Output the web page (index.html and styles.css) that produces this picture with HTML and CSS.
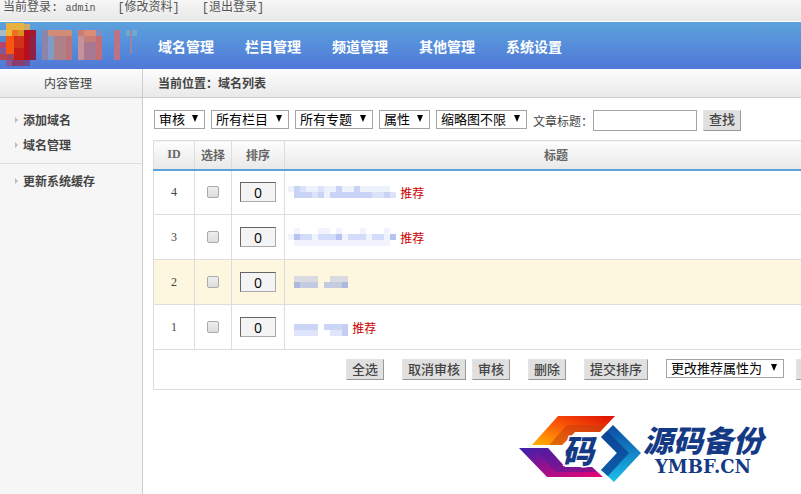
FILE: index.html
```
<!DOCTYPE html>
<html lang="zh-CN">
<head>
    <meta charset="UTF-8">
    <meta name="viewport" content="width=device-width, initial-scale=1.0">
    <title>域名列表</title>
    <link rel="stylesheet" href="styles.css">
</head>
<body>

    <div class="topbar">
        <span>当前登录: <span class="user">admin</span></span>
        <a href="#">[修改资料]</a>
        <a href="#">[退出登录]</a>
    </div>

    <header class="header">
        <div class="logo">
            <svg width="142" height="47" viewBox="0 0 142 47" shape-rendering="crispEdges">
                <path fill="#a8bcc5" d="M0 8h6v6H0z"/>
                <path fill="#5288d0" d="M0 14h6v6H0z"/>
                <path fill="#b5456b" d="M0 20h6v6H0z"/>
                <path fill="#82579c" d="M0 26h6v6H0z"/>
                <path fill="#b84350" d="M0 32h6v6H0z"/>
                <path fill="#e8b240" d="M6 1h18v7H6z"/>
                <path fill="#c9ad68" d="M24 2h6v6h-6z"/>
                <path fill="#eeb63c" d="M6 8h6v6H6z"/>
                <path fill="#ee701e" d="M12 8h6v6h-6z"/>
                <path fill="#d8901f" d="M18 8h6v6h-6z"/>
                <path fill="#fb5512" d="M6 14h8v18H6z"/>
                <path fill="#d3301a" d="M14 14h10v18H14z"/>
                <path fill="#c51c17" d="M14 26h10v12H14z"/>
                <path fill="#b60f1d" d="M24 8h6v30h-6z"/>
                <path fill="#a5182d" d="M30 8h6v6h-6z"/>
                <path fill="#8d2249" d="M30 14h6v24h-6z"/>
                <path fill="#a24565" d="M6 32h8v6H6z"/>
                <path fill="#8a5795" d="M6 38h6v6H6z"/>
                <path fill="#8a3d70" d="M12 38h12v6H12z"/>
                <path fill="#6d4b94" d="M24 38h6v6h-6z"/>
                <path fill="#8d84a8" d="M42 8h6v30h-6z"/>
                <path fill="#b08088" d="M48 8h24v30H48z"/>
                <path fill="#7e9bc9" d="M48 14h6v24h-6z"/>
                <path fill="#d18c78" d="M48 8h24v6H48z"/>
                <path fill="#ba7479" d="M66 14h6v24h-6z"/>
                <path fill="#c77e77" d="M78 8h24v30H78z"/>
                <path fill="#c6919b" d="M78 14h6v24h-6z"/>
                <path fill="#a87791" d="M84 20h12v18H84z"/>
                <path fill="#dc8c77" d="M84 8h12v6H84z"/>
                <path fill="#7f8fc6" d="M96 8h6v6h-6z"/>
                <path fill="#c46d75" d="M96 14h6v24h-6z"/>
                <path fill="#bc7384" d="M114 8h6v30h-6z"/>
                <path fill="#6fa9cf" d="M126 8h11v6h-11z"/>
                <path fill="#9b83a5" d="M130 8h2v24h-2z"/>
            </svg>
        </div>
        <nav class="nav">
            <a href="#">域名管理</a>
            <a href="#">栏目管理</a>
            <a href="#">频道管理</a>
            <a href="#">其他管理</a>
            <a href="#">系统设置</a>
        </nav>
    </header>

    <div class="wrap">
        <aside class="sidebar">
            <div class="side-title">内容管理</div>
            <ul class="menu">
                <li><a href="#">添加域名</a></li>
                <li><a href="#">域名管理</a></li>
            </ul>
            <ul class="menu">
                <li><a href="#">更新系统缓存</a></li>
            </ul>
        </aside>

        <main class="main">
            <div class="crumb">当前位置：域名列表</div>

            <form class="search">
                <select class="w-s" aria-label="审核"><option>审核</option></select>
                <select class="w-m" aria-label="栏目"><option>所有栏目</option></select>
                <select class="w-m" aria-label="专题"><option>所有专题</option></select>
                <select class="w-s" aria-label="属性"><option>属性</option></select>
                <select class="w-l" aria-label="缩略图"><option>缩略图不限</option></select>
                <div class="field">
                    <label for="keyword">文章标题：</label>
                    <input type="text" id="keyword" class="keyword">
                </div>
                <button type="button" class="btn">查找</button>
            </form>

            <table class="list">
                <thead>
                    <tr>
                        <th class="c-id">ID</th>
                        <th class="c-check">选择</th>
                        <th class="c-order">排序</th>
                        <th class="c-title">标题</th>
                        <th></th>
                    </tr>
                </thead>
                <tbody>
                    <tr>
                        <td class="id">4</td>
                        <td><input type="checkbox" aria-label="选择 4"></td>
                        <td><input type="text" class="order" value="0" aria-label="排序 4"></td>
                        <td class="title">
                            <svg width="108" height="18" viewBox="0 0 108 18" shape-rendering="crispEdges">
                                <path fill="#edf1fc" d="M0 3h102v6H0zM6 9h102v6H6z"/>
                                <path fill="#dce3f9" d="M12 3h6v6h-6zM30 3h6v6h-6zM24 9h6v6h-6zM84 9h12v6H84zM102 9h6v6h-6z"/>
                                <path fill="#c8d3f5" d="M6 3h6v6H6zM48 3h6v6h-6zM66 3h6v6h-6zM6 9h18v6H6zM30 9h6v6h-6zM42 9h42v6H42zM96 9h6v6h-6z"/>
                            </svg>
                            <span class="red">推荐</span>
                        </td>
                        <td></td>
                    </tr>
                    <tr>
                        <td class="id">3</td>
                        <td><input type="checkbox" aria-label="选择 3"></td>
                        <td><input type="text" class="order" value="0" aria-label="排序 3"></td>
                        <td class="title">
                            <svg width="108" height="18" viewBox="0 0 108 18" shape-rendering="crispEdges">
                                <path fill="#f1f4fd" d="M6 0h6v6H6zM30 0h12v6H30zM48 0h6v6h-6zM72 0h6v6h-6zM96 0h6v6h-6zM0 6h108v6H0zM6 12h96v6H6z"/>
                                <path fill="#d3dcf8" d="M12 6h12v6H12zM30 6h18v6H30zM60 6h18v6H60zM84 6h12v6H84z"/>
                                <path fill="#b5c3f0" d="M6 6h6v6H6zM48 6h6v6h-6zM102 6h6v6h-6z"/>
                            </svg>
                            <span class="red">推荐</span>
                        </td>
                        <td></td>
                    </tr>
                    <tr class="on">
                        <td class="id">2</td>
                        <td><input type="checkbox" aria-label="选择 2"></td>
                        <td><input type="text" class="order" value="0" aria-label="排序 2"></td>
                        <td class="title">
                            <svg width="60" height="18" viewBox="0 0 60 18" shape-rendering="crispEdges">
                                <path fill="#dadbe0" d="M6 3h24v6H6zM42 3h18v6H42z"/>
                                <path fill="#c2cbdf" d="M6 9h24v6H6zM36 9h24v6H36z"/>
                                <path fill="#aab9dc" d="M6 9h6v6H6zM54 9h6v6h-6z"/>
                            </svg>
                        </td>
                        <td></td>
                    </tr>
                    <tr>
                        <td class="id">1</td>
                        <td><input type="checkbox" aria-label="选择 1"></td>
                        <td><input type="text" class="order" value="0" aria-label="排序 1"></td>
                        <td class="title">
                            <svg width="60" height="18" viewBox="0 0 60 18" shape-rendering="crispEdges">
                                <path fill="#cbd5f5" d="M6 6h24v6H6zM36 6h24v6H36z"/>
                                <path fill="#dfe5fa" d="M6 12h24v6H6zM42 12h12v6H42z"/>
                                <path fill="#c3cef2" d="M54 6h6v12h-6z"/>
                            </svg>
                            <span class="red">推荐</span>
                        </td>
                        <td></td>
                    </tr>
                </tbody>
                <tfoot>
                    <tr>
                        <td colspan="5">
                            <div class="actions">
                                <button type="button" class="btn">全选</button>
                                <div class="group">
                                    <button type="button" class="btn">取消审核</button>
                                    <button type="button" class="btn">审核</button>
                                </div>
                                <button type="button" class="btn">删除</button>
                                <button type="button" class="btn">提交排序</button>
                                <div class="group group-set">
                                    <select class="w-xl" aria-label="更改推荐属性为"><option>更改推荐属性为</option></select>
                                    <button type="button" class="btn" aria-label="更改"></button>
                                </div>
                            </div>
                        </td>
                    </tr>
                </tfoot>
            </table>
        </main>
    </div>

    <!-- Site mark -->
    <div class="mark">
        <svg width="124" height="68" viewBox="0 0 124 68">
            <defs>
                <linearGradient id="g1" x1="0" y1="1" x2="1" y2="0">
                    <stop offset="0" stop-color="#ffb400"/>
                    <stop offset=".5" stop-color="#fb5a08"/>
                    <stop offset="1" stop-color="#dc0c04"/>
                </linearGradient>
                <linearGradient id="g2" x1="0" y1="0" x2="1" y2="1">
                    <stop offset="0" stop-color="#3b21b0"/>
                    <stop offset=".5" stop-color="#98108e"/>
                    <stop offset="1" stop-color="#ea0672"/>
                </linearGradient>
                <linearGradient id="g3" x1="0" y1="0" x2="0" y2="1">
                    <stop offset="0" stop-color="#0c4aa0"/>
                    <stop offset="1" stop-color="#1cc0ec"/>
                </linearGradient>
            </defs>
            <path fill="url(#g1)" d="M13 30 39 1h57L81 17H56L43 30z"/>
            <path fill="#c23a10" opacity=".5" d="M30 30 48 10h39l-6 7H56L43 30z"/>
            <path fill="url(#g2)" d="M0 33h29l17 19h27l11 10H28z"/>
            <path fill="#4a1b9c" opacity=".5" d="M15 33h14l17 19h27l5 5H37z"/>
            <path fill="url(#g3)" d="m94 10 28 28-27 29-13-12 16-17-16-16z"/>
            <path fill="#0a3a90" opacity=".7" d="m88 16 22 22-21 23-7-6 16-17-16-16z"/>
            <text class="mark-halo" x="43" y="48">码</text>
        </svg>
        <div class="mark-text">
            <div class="mark-cn">源码备份</div>
            <div class="mark-en">YMBF.CN</div>
        </div>
    </div>

</body>
</html>
```

FILE: styles.css
```
* {
    box-sizing: border-box;
}

body {
    margin: 0;
    min-height: 100vh;
    display: flex;
    flex-direction: column;
    font-family: "Liberation Sans", "Noto Sans CJK SC", sans-serif;
    font-size: 12px;
    color: #444;
    background: #fff;
    overflow: hidden;
}

a {
    color: inherit;
    text-decoration: none;
}

/* Top bar */
.topbar {
    display: flex;
    gap: 22px;
    height: 22px;
    padding-left: 3px;
    line-height: 16px;
    font-family: "Liberation Mono", "Noto Sans CJK SC", monospace;
    color: #555;
    background: linear-gradient(#f6f6f6, #e8e8e8);
    border-bottom: 1px solid #fff;
}

.topbar .user {
    font-size: 10px;
}

/* Header */
.header {
    display: flex;
    height: 47px;
    background: linear-gradient(#5ca2dc, #5078d8);
}

.logo {
    width: 142px;
}

.logo svg {
    display: block;
}

.nav {
    display: flex;
    gap: 31px;
    padding-left: 16px;
    line-height: 50px;
    color: #fff;
    font-size: 14px;
    font-weight: bold;
}

/* Layout */
.wrap {
    flex: 1;
    display: flex;
}

.sidebar {
    flex: none;
    width: 143px;
    background: #f6f6f6;
    border-right: 1px solid #ccc;
}

.main {
    flex: 1;
    min-width: 0;
    overflow: hidden;
}

.side-title,
.crumb {
    height: 29px;
    line-height: 30px;
    background: linear-gradient(#fdfdfd, #e9e9e9);
    border-bottom: 1px solid #ccc;
}

.side-title {
    padding-right: 6px;
    text-align: center;
}

.crumb {
    padding-left: 15px;
    font-weight: bold;
}

/* Side menu */
.menu {
    list-style: none;
    margin: 0;
    padding: 9px 0 6px 15px;
}

.menu + .menu {
    padding-top: 4px;
    border-top: 1px solid #ddd;
}

.menu li {
    display: flex;
    align-items: center;
    gap: 5px;
    height: 25px;
    font-weight: bold;
}

.menu li::before {
    content: "";
    border: 3px solid transparent;
    border-left-color: #bbb;
    border-right: 0;
}

/* Search form */
.search {
    display: flex;
    align-items: center;
    gap: 6px;
    height: 42px;
    padding: 2px 0 0 11px;
    white-space: nowrap;
}

.field {
    display: flex;
    align-items: center;
}

select {
    appearance: none;
    flex: none;
    height: 19px;
    padding: 0 4px;
    border: 1px solid #a5a5a5;
    border-radius: 0;
    font-family: inherit;
    font-size: 13px;
    line-height: 17px;
    color: #000;
    background: #fff url("data:image/svg+xml,%3Csvg xmlns='http://www.w3.org/2000/svg' width='6' height='7'%3E%3Cpath d='M0 0h6L3 7z'/%3E%3C/svg%3E") no-repeat right 6px top 4px;
}

.search select {
    margin-bottom: 2px;
}

.w-s {
    width: 51px;
}

.w-m {
    width: 78px;
}

.w-l {
    width: 91px;
}

.w-xl {
    width: 118px;
}

.keyword {
    width: 104px;
    height: 21px;
    padding: 0 3px;
    border: 1px solid #a5a5a5;
}

.btn {
    flex: none;
    height: 21px;
    padding: 0 5px;
    border: 1px solid #e4e4e4;
    border-right-color: #999;
    border-bottom-color: #999;
    background: #e0e0e0;
    font-family: inherit;
    font-size: 13px;
    font-weight: 500;
    line-height: 18px;
    color: #444;
}

/* List table */
.list {
    width: 1020px;
    margin-left: 10px;
    table-layout: fixed;
    border-collapse: collapse;
    border: 1px solid #ddd;
}

.list th {
    height: 29px;
    padding: 0;
    color: #666;
    background: linear-gradient(#fdfdfd, #e8e8e8);
    border-right: 1px solid #ddd;
    border-bottom: 2px solid #5ca2d8;
}

.c-id {
    width: 41px;
    font-family: "Liberation Serif", serif;
}

.c-check {
    width: 37px;
}

.c-order {
    width: 53px;
}

.c-title {
    width: 543px;
}

.list td {
    height: 45px;
    padding: 0;
    text-align: center;
    border-right: 1px solid #ddd;
    border-bottom: 1px solid #ddd;
}

.list .id {
    font-family: "Liberation Serif", serif;
}

.list tfoot td {
    height: 40px;
}

.list .on td {
    background: #fef7e0;
}

.list input[type="checkbox"] {
    appearance: none;
    display: block;
    width: 12px;
    height: 12px;
    margin: 0 auto;
    border: 1px solid #aaa;
    border-radius: 2px;
    background: linear-gradient(#eee, #ddd);
}

.list .order {
    display: block;
    width: 36px;
    height: 20px;
    margin: 0 auto;
    padding: 0;
    text-align: center;
    font-family: "Open Sans", sans-serif;
    font-size: 14px;
    line-height: 18px;
    color: #000;
    background: #f4f4f4;
    border: 1px solid #aaa;
    border-top-color: #666;
    border-left-color: #666;
}

.list .title {
    padding-left: 3px;
    text-align: left;
}

.title svg {
    margin-right: 1px;
    vertical-align: middle;
}

.red {
    color: #c00;
    vertical-align: middle;
}

/* Batch actions */
.actions {
    display: flex;
    align-items: center;
    gap: 18px;
    padding-left: 192px;
}

.group {
    display: flex;
    gap: 6px;
}

.group-set {
    gap: 12px;
}

.group-set .btn {
    width: 40px;
}

/* Site mark */
.mark {
    position: absolute;
    right: 38px;
    bottom: 11px;
    display: flex;
    align-items: center;
    color: #143a85;
}

.mark-halo {
    font-family: "Noto Sans CJK SC", sans-serif;
    font-size: 32px;
    font-weight: 900;
    font-style: italic;
    fill: #143a85;
    stroke: #fff;
    stroke-width: 3px;
    paint-order: stroke;
}

.mark-text {
    text-align: center;
}

.mark-cn {
    font-family: "Noto Sans CJK SC", sans-serif;
    font-size: 30px;
    font-weight: 900;
    font-style: italic;
    line-height: 36px;
}

.mark-en {
    font-family: "DejaVu Serif", serif;
    font-size: 18px;
    font-weight: bold;
    line-height: 20px;
}
```
